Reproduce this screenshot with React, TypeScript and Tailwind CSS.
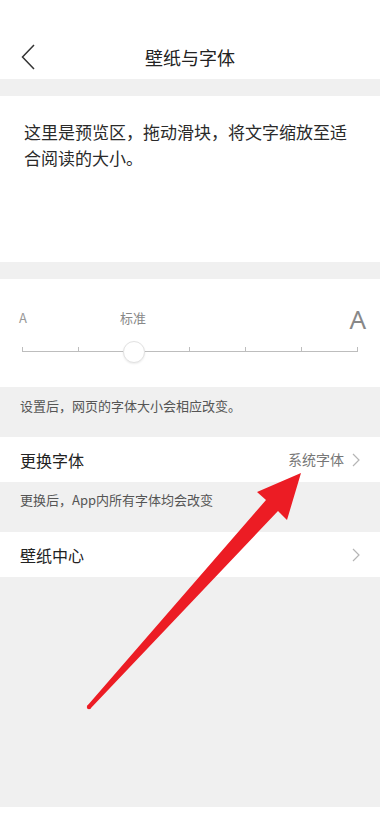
const font = { fontFamily: '"Noto Sans CJK SC", "Noto Sans", sans-serif' };

function Chevron() {
  return (
    <svg width="8" height="14" viewBox="0 0 8 14" className="shrink-0">
      <path d="M1 1 L7 7 L1 13" fill="none" stroke="#b5b5b5" strokeWidth="1.2" />
    </svg>
  );
}

export default function App() {
  const ticks = [0, 1, 2, 3, 4, 5, 6];

  return (
    <div className="relative w-[380px] h-[823px] bg-[#f0f0f0] overflow-hidden" style={font}>
      {/* header */}
      <header className="h-[79px] bg-white flex items-end pb-[10px] relative">
        <div className="w-full flex items-center h-[24px]">
          <svg width="14" height="26" viewBox="0 0 14 26" className="ml-[21px]">
            <path d="M13 1 L1.5 13 L13 25" fill="none" stroke="#333" strokeWidth="1.5" />
          </svg>
          <h1 className="flex-1 text-center text-[18px] text-[#222] mr-[35px] leading-none">壁纸与字体</h1>
        </div>
      </header>

      {/* preview */}
      <section className="mt-[17px] h-[166px] bg-white px-[24px] pt-[23px]">
        <p className="text-[17px] leading-[26px] text-[#2a2a2a]">
          这里是预览区，拖动滑块，将文字缩放至适合阅读的大小。
        </p>
      </section>

      {/* slider */}
      <section className="mt-[17px] h-[108px] bg-white pt-[25px] px-[22px]">
        <div className="flex items-end h-[28px] -ml-[3px] -mr-[8px]">
          <span className="text-[13px] leading-none text-[#999] mb-[8px]">A</span>
          <span className="ml-[93px] text-[13px] leading-none text-[#888] mb-[8px]">标准</span>
          <span className="ml-auto text-[26px] leading-none text-[#888]" style={{ fontFamily: '"Noto Sans", sans-serif' }}>A</span>
        </div>
        <div className="relative mt-[15px]">
          <div className="flex justify-between border-b border-[#bdbdbd] h-[5px]">
            {ticks.map((t) => (
              <div key={t} className="w-px h-[5px] bg-[#bdbdbd]" />
            ))}
          </div>
          <div className="absolute left-[101px] top-[-6px] w-[22px] h-[22px] rounded-full bg-white border border-[#e2e2e2] shadow-[0_1px_2px_rgba(0,0,0,0.08)]" />
        </div>
      </section>

      {/* note */}
      <div className="h-[50px] px-[20px] pt-[10px]">
        <p className="text-[13px] leading-[18px] text-[#555]">设置后，网页的字体大小会相应改变。</p>
      </div>

      {/* change font */}
      <div className="h-[45px] bg-white flex items-center px-[20px]">
        <span className="text-[16px] text-[#222]">更换字体</span>
        <span className="ml-auto text-[14px] text-[#777] mr-[8px]">系统字体</span>
        <Chevron />
      </div>
      <div className="h-[50px] px-[20px] pt-[9px]">
        <p className="text-[13px] leading-[18px] text-[#555]">更换后，App内所有字体均会改变</p>
      </div>

      {/* wallpaper */}
      <div className="h-[45px] bg-white flex items-center px-[20px]">
        <span className="text-[16px] text-[#222]">壁纸中心</span>
        <span className="ml-auto" />
        <Chevron />
      </div>

      <div className="absolute left-0 right-0 bottom-0 h-[16px] bg-white" />

      {/* red annotation arrow */}
      <svg className="absolute inset-0 pointer-events-none" width="380" height="823" viewBox="0 0 380 823">
        <polygon
          points="87.5,705.6 266,500 257,492 301,473 287,520 278,511 90.5,708.4"
          fill="#ec1c24"
        />
        <circle cx="89" cy="707" r="2.2" fill="#ec1c24" />
      </svg>
    </div>
  );
}
